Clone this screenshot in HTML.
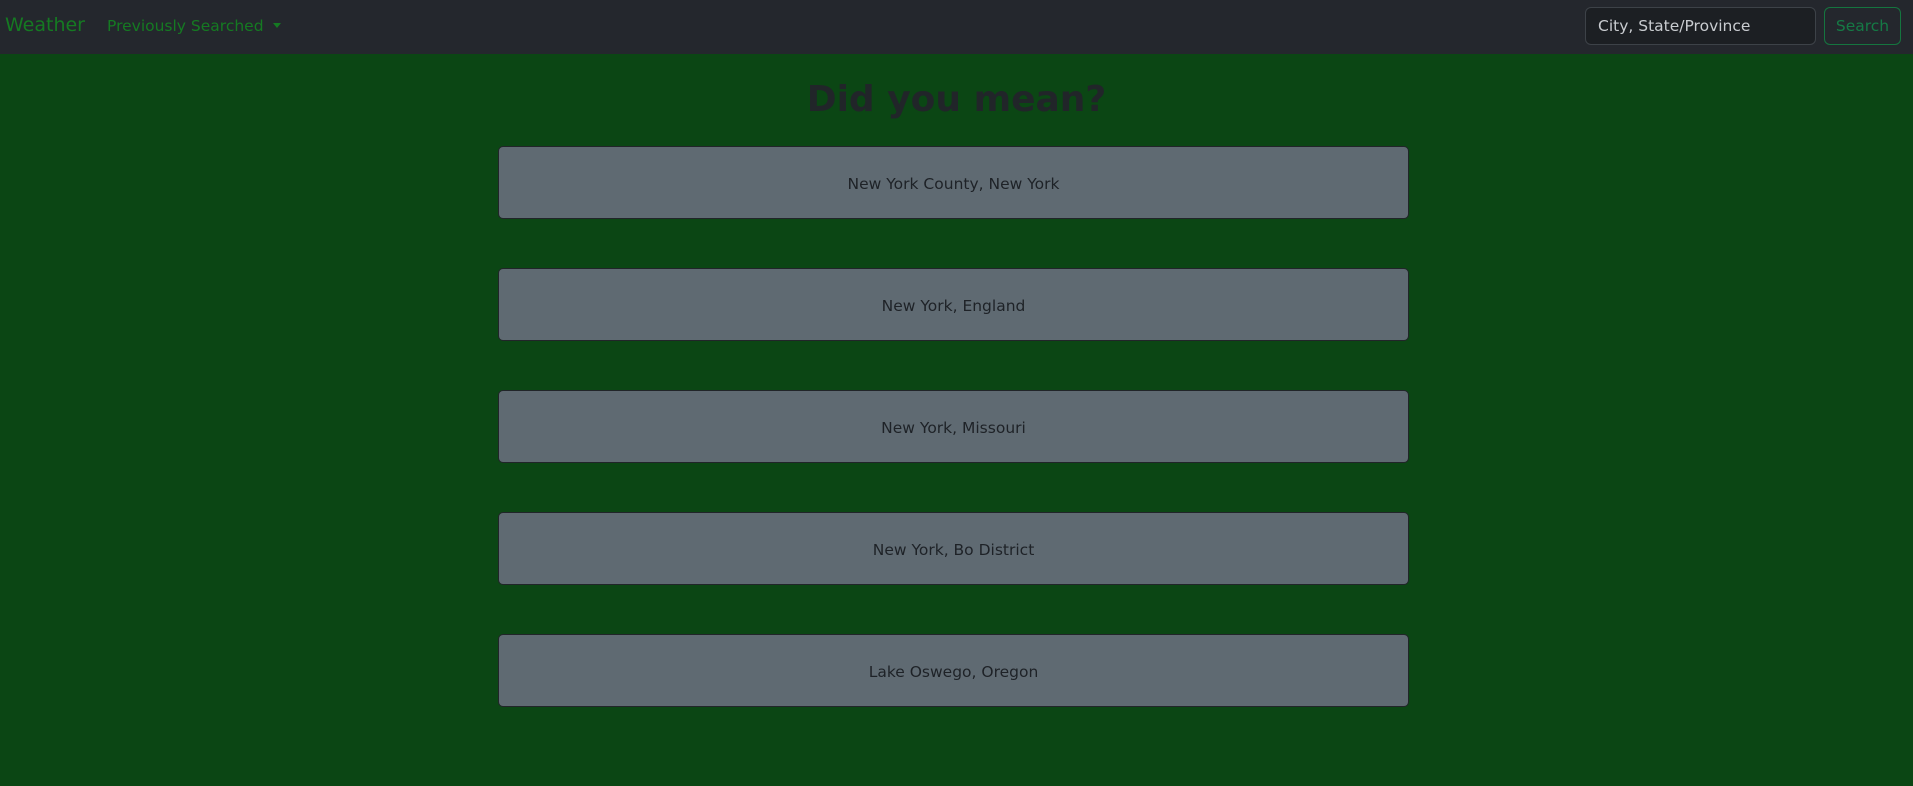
<!DOCTYPE html>
<html><head><meta charset="utf-8"><style>
*{box-sizing:border-box;margin:0;padding:0}
body{width:1913px;height:786px;background:#0b4614;font-family:"DejaVu Sans","Liberation Sans",sans-serif;overflow:hidden;position:relative}
.nav{position:absolute;left:0;top:0;width:1913px;height:54px;background:#24272d}
.brand{position:absolute;left:5px;top:14px;font-size:19px;color:#157a22}
.prev{position:absolute;left:107px;top:17px;font-size:15.5px;color:#157a22}
.prev:after{content:"";display:inline-block;margin-left:9px;vertical-align:3px;border-left:4px solid transparent;border-right:4px solid transparent;border-top:5px solid #157a22}
.inp{position:absolute;left:1585px;top:7px;width:231px;height:38px;background:#1c1f23;border:1px solid #3d4248;border-radius:6px;color:#c9ccd0;font-size:15.5px;padding:9px 12px}
.btn{position:absolute;left:1824px;top:7px;width:77px;height:38px;border:1px solid #15753f;border-radius:6px;color:#157a45;font-size:15.5px;text-align:center;line-height:36px}
h1{position:absolute;left:0;width:1913px;top:79px;text-align:center;font-size:36px;font-weight:bold;color:#212529}
.box{position:absolute;left:498px;width:911px;height:73px;background:#5f6a72;border:1px solid #212529;border-radius:5px;color:#1e2227;font-size:15.5px;text-align:center;line-height:75px}
</style></head><body>
<div class="nav">
<div class="brand">Weather</div>
<div class="prev">Previously Searched</div>
<div class="inp">City, State/Province</div>
<div class="btn">Search</div>
</div>
<h1>Did you mean?</h1>
<div class="box" style="top:146px">New York County, New York</div>
<div class="box" style="top:268px">New York, England</div>
<div class="box" style="top:390px">New York, Missouri</div>
<div class="box" style="top:512px">New York, Bo District</div>
<div class="box" style="top:634px">Lake Oswego, Oregon</div>
</body></html>
